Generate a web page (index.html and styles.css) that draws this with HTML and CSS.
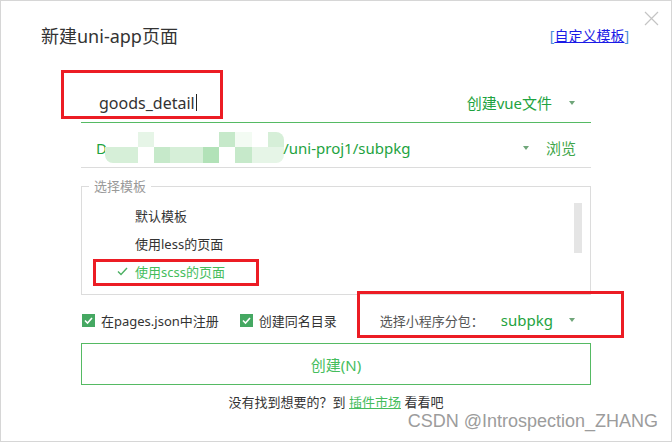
FILE: index.html
```html
<!DOCTYPE html>
<html lang="zh-CN">
<head>
  <meta charset="UTF-8" />
  <title>新建uni-app页面</title>
  <link rel="stylesheet" href="styles.css">
</head>
<body>

  <div class="dialog">
    <button class="close" aria-label="关闭">
      <svg width="15" height="15" viewBox="0 0 15 15"><path d="M1 1 L14 14 M14 1 L1 14" stroke="#c4c4c4" stroke-width="1.2" fill="none"/></svg>
    </button>

    <header class="dialog-head">
      <h1>新建uni-app页面</h1>
      <a class="custom-link" href="#"><span class="bracket">[</span><u>自定义模板</u><span class="bracket">]</span></a>
    </header>

    <div class="form">
      <div class="row name-row">
        <span class="page-name">goods_detail<i class="caret"></i></span>
        <span class="select">创建vue文件<i class="tri"></i></span>
      </div>

      <div class="row path-row">
        <span class="path">D<span class="mosaic">
          <b></b><b></b><b class="m1"></b><b></b><b></b><b></b><b></b><b class="m3"></b><b class="m5"></b><b></b><b class="m2 tr"></b>
          <b class="m2 bl"></b><b class="m2"></b><b class="m0"></b><b class="m3"></b><b class="m2"></b><b class="m2"></b><b class="m4"></b><b class="m0"></b><b class="m3"></b><b class="m1"></b><b class="m1 br"></b>
        </span>/uni-proj1/subpkg</span>
        <i class="tri"></i>
        <a class="browse" href="#">浏览</a>
      </div>

      <fieldset class="templates">
        <legend>选择模板</legend>
        <div class="tpl-body">
          <ul class="tpl-list">
            <li><span class="tick"></span>默认模板</li>
            <li><span class="tick"></span>使用less的页面</li>
            <li class="active">
              <span class="tick"><svg width="11" height="9" viewBox="0 0 11 9"><path d="M1 4.5 L4 7.5 L10 1" stroke="#4cb063" stroke-width="1.4" fill="none"/></svg></span>使用scss的页面
            </li>
          </ul>
          <div class="scroll"><div class="thumb"></div></div>
        </div>
      </fieldset>

      <div class="options">
        <label class="check">
          <span class="box"><svg width="13" height="13" viewBox="0 0 13 13"><path d="M3 6.5 L5.5 9 L10 4" stroke="#fff" stroke-width="1.6" fill="none"/></svg></span>在pages.json中注册
        </label>
        <label class="check">
          <span class="box"><svg width="13" height="13" viewBox="0 0 13 13"><path d="M3 6.5 L5.5 9 L10 4" stroke="#fff" stroke-width="1.6" fill="none"/></svg></span>创建同名目录
        </label>
        <div class="subpkg">
          <span class="subpkg-label">选择小程序分包：</span>
          <span class="subpkg-value">subpkg</span>
          <i class="tri"></i>
        </div>
      </div>

      <button class="create">创建(N)</button>

      <p class="hint">没有找到想要的？到 <a href="#">插件市场</a> 看看吧</p>
    </div>

    <!-- screenshot annotations -->
    <div class="mark mark-name"></div>
    <div class="mark mark-tpl"></div>
    <div class="mark mark-subpkg"></div>

    <div class="watermark">CSDN @Introspection_ZHANG</div>
  </div>

</body>
</html>
```

FILE: styles.css
```css
:root {
  --text-color: #333333;
  --green: #1ea340;
  --green-light: #45bd5c;
  --line-green: #55ba63;
  --line-gray: #dcdcdc;
  --tri-color: #6fa679;
  --mark-red: #ec1c24;
}

* {
  margin: 0;
  padding: 0;
  box-sizing: border-box;
}

body {
  font-family: "Noto Sans", "Noto Sans CJK SC", sans-serif;
  color: var(--text-color);
  background: #ffffff;
}

.dialog {
  position: relative;
  width: 672px;
  height: 442px;
  border: 1px solid #d6d6d6;
  background: #ffffff;
  overflow: hidden;
}

.close {
  position: absolute;
  top: 10px;
  right: 12px;
  width: 15px;
  height: 15px;
  border: none;
  background: none;
  display: flex;
}

.dialog-head {
  display: flex;
  align-items: center;
  justify-content: space-between;
  padding: 23px 42px 0 40px;
  height: 47px;
}

.dialog-head h1 {
  font-size: 18px;
  font-weight: normal;
  line-height: 24px;
  color: #333;
}

.custom-link {
  font-size: 14px;
  line-height: 20px;
  color: #1a1ae6;
  text-decoration: none;
}

.custom-link .bracket {
  color: #4a8ed8;
}

.form {
  margin: 0 80px;
}

.row {
  display: flex;
  align-items: center;
}

.tri {
  display: inline-block;
  width: 0;
  height: 0;
  border-left: 3.5px solid transparent;
  border-right: 3.5px solid transparent;
  border-top: 4px solid var(--tri-color);
}

.name-row {
  margin-top: 35px;
  height: 40px;
  padding: 0 16px 0 18px;
  border-bottom: 1px solid var(--line-green);
  justify-content: space-between;
}

.page-name {
  font-size: 16px;
  line-height: 22px;
  color: #333;
  display: flex;
  align-items: center;
}

.caret {
  display: inline-block;
  width: 1px;
  height: 17px;
  margin-left: 1px;
  background: #222;
}

.select {
  font-size: 15px;
  line-height: 20px;
  color: var(--green);
  display: flex;
  align-items: center;
  gap: 17px;
}

.path-row {
  height: 45px;
  padding: 5px 15px 0 15px;
  border-bottom: 1px solid var(--line-gray);
}

.path {
  flex: 1;
  display: flex;
  align-items: center;
  font-size: 15px;
  line-height: 20px;
  color: var(--green);
}

.mosaic {
  display: grid;
  grid-template-columns: repeat(11, 16.3px);
  grid-template-rows: 15px 16px;
  margin: 0 -1px 0 -2px;
}

.mosaic b { background: transparent; }
.mosaic .m0 { background: #ffffff; }
.mosaic .m1 { background: #e6f5e7; }
.mosaic .m2 { background: #d6efd8; }
.mosaic .m3 { background: #c6e9ca; }
.mosaic .m4 { background: #b2e2b8; }
.mosaic .m5 { background: #f3fbf3; }
.mosaic .tr { border-top-right-radius: 8px; }
.mosaic .bl { border-bottom-left-radius: 8px; }
.mosaic .br { border-bottom-right-radius: 8px; }

.browse {
  margin-left: 17px;
  font-size: 15px;
  line-height: 20px;
  color: #3fa64a;
  text-decoration: none;
}

.templates {
  margin-top: 10px;
  border: 1px solid var(--line-gray);
  padding: 0;
}

.templates legend {
  margin-left: 7px;
  padding: 0 5px;
  font-size: 13px;
  line-height: 16px;
  color: #999;
}

.tpl-body {
  display: flex;
  justify-content: space-between;
  padding: 7px 0 9px 0;
}

.tpl-list {
  list-style: none;
  padding-left: 35px;
}

.tpl-list li {
  display: flex;
  align-items: center;
  height: 28px;
  font-size: 13px;
  color: #333;
}

.tpl-list li.active {
  color: var(--green-light);
}

.tick {
  width: 18px;
  display: flex;
}

.scroll {
  width: 8px;
  margin-right: 8px;
}

.thumb {
  margin-top: 2px;
  height: 50px;
  background: #e5e5e5;
}

.options {
  display: flex;
  align-items: center;
  height: 26px;
  margin-top: 12px;
  padding: 0 16px 0 1px;
}

.check {
  display: flex;
  align-items: center;
  gap: 6px;
  font-size: 13px;
  color: #333;
}

.check + .check {
  margin-left: 21px;
}

.box {
  width: 13px;
  height: 13px;
  background: #45a862;
  display: flex;
}

.subpkg {
  margin-left: auto;
  display: flex;
  align-items: center;
}

.subpkg-label {
  font-size: 13px;
  color: #555;
}

.subpkg-value {
  margin: 0 16px 0 17px;
  font-size: 15px;
  color: var(--green);
}

.create {
  display: block;
  width: 100%;
  height: 42px;
  margin-top: 10px;
  border: 1px solid var(--line-green);
  background: #ffffff;
  font-family: inherit;
  font-size: 15px;
  color: var(--green-light);
}

.hint {
  margin-top: 8px;
  font-size: 13px;
  line-height: 18px;
  text-align: center;
  color: #333;
}

.hint a {
  color: var(--green-light);
}

.mark {
  position: absolute;
  border: 3px solid var(--mark-red);
}

.mark-name {
  left: 60px;
  top: 69px;
  width: 162px;
  height: 49px;
}

.mark-tpl {
  left: 92px;
  top: 258px;
  width: 166px;
  height: 27px;
}

.mark-subpkg {
  left: 356px;
  top: 290px;
  width: 267px;
  height: 47px;
}

.watermark {
  position: absolute;
  right: 13px;
  bottom: 10px;
  font-family: "Liberation Sans", Arial, sans-serif;
  font-size: 18px;
  line-height: 20px;
  color: #9c9c9c;
  text-shadow: 0 0 2px #ffffff;
}
```
